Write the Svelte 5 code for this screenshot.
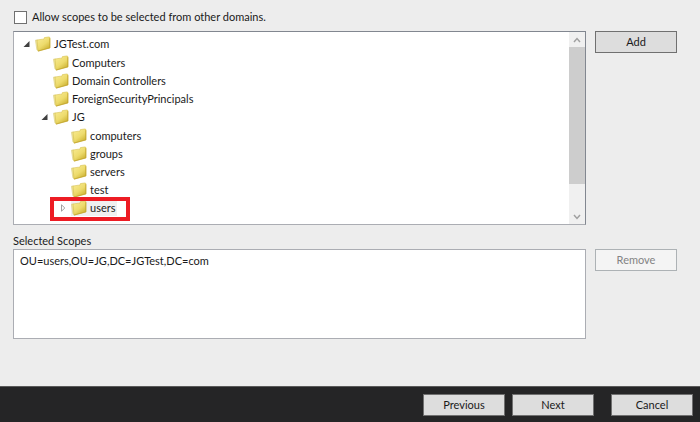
<script>
  let allowOther = $state(false);
  let selected = $state('users');

  const tree = [
    {
      name: 'JGTest.com',
      open: true,
      children: [
        { name: 'Computers' },
        { name: 'Domain Controllers' },
        { name: 'ForeignSecurityPrincipals' },
        {
          name: 'JG',
          open: true,
          children: [
            { name: 'computers' },
            { name: 'groups' },
            { name: 'servers' },
            { name: 'test' },
            { name: 'users', collapsed: true, marked: true }
          ]
        }
      ]
    }
  ];

  const scopes = ['OU=users,OU=JG,DC=JGTest,DC=com'];
</script>

{#snippet folder()}
  <svg class="folder" viewBox="0 0 16 16" aria-hidden="true">
    <defs>
      <linearGradient id="front" x1="0.2" y1="0" x2="0.9" y2="1">
        <stop offset="0" stop-color="#f8ea90" />
        <stop offset="0.5" stop-color="#eddb6c" />
        <stop offset="1" stop-color="#c4a824" />
      </linearGradient>
    </defs>
    <path d="M0.4 4.2 L2.2 3.8 L3.2 14.8 L1.8 13.4 Z" fill="#f1e7a0" stroke="#d5c670" stroke-width="0.5" />
    <path d="M2 4 L7.4 3.2 L8.4 3.6 L9.4 1.6 L14 0.9 L15 1.6 L15 12 L3 15.2 Z" fill="url(#front)" stroke="#d0b840" stroke-width="0.5" />
    <path d="M14.8 2.2 L14.8 11.8 L3.2 15" fill="none" stroke="#bfa12a" stroke-width="0.7" />
  </svg>
{/snippet}

{#snippet branch(nodes)}
  {#each nodes as node}
    <li role="treeitem" aria-selected={selected === node.name} aria-expanded={node.children ? node.open : undefined}>
      <div class="row">
        {#if node.children}
          <button class="toggle" aria-label="Collapse {node.name}">
            <svg viewBox="0 0 8 8"><path d="M6.5 1 V7 H0.5 Z" fill="#404040" /></svg>
          </button>
        {:else if node.collapsed}
          <button class="toggle" aria-label="Expand {node.name}">
            <svg viewBox="0 0 8 8"><path d="M2.5 0.8 V7.2 L5.8 4 Z" fill="#fff" stroke="#969696" stroke-width="0.9" /></svg>
          </button>
        {:else}
          <span class="toggle"></span>
        {/if}
        <button class="node" class:selected={selected === node.name} onclick={() => (selected = node.name)}>
          {@render folder()}
          <span>{node.name}</span>
        </button>
        {#if node.marked}<span class="mark"></span>{/if}
      </div>
      {#if node.children}
        <ul role="group">{@render branch(node.children)}</ul>
      {/if}
    </li>
  {/each}
{/snippet}

<div class="window">
  <main>
    <label class="allow">
      <input type="checkbox" bind:checked={allowOther} />
      <span>Allow scopes to be selected from other domains.</span>
    </label>

    <div class="line">
      <div class="box tree-box">
        <ul class="tree" role="tree">{@render branch(tree)}</ul>
        <div class="scrollbar">
          <button aria-label="Scroll up"><svg viewBox="0 0 8 6"><path d="M1 5 L4 1.6 L7 5" /></svg></button>
          <div class="thumb"></div>
          <button aria-label="Scroll down"><svg viewBox="0 0 8 6"><path d="M1 1 L4 4.4 L7 1" /></svg></button>
        </div>
      </div>
      <button class="push">Add</button>
    </div>

    <h2 id="scopes-title">Selected Scopes</h2>

    <div class="line">
      <ul class="box scopes" aria-labelledby="scopes-title">
        {#each scopes as scope}
          <li>{scope}</li>
        {/each}
      </ul>
      <button class="push" disabled>Remove</button>
    </div>
  </main>

  <footer>
    <button class="push">Previous</button>
    <button class="push">Next</button>
    <button class="push cancel">Cancel</button>
  </footer>
</div>

<style>
  .window {
    min-height: 100vh;
    display: flex;
    flex-direction: column;
    background: #ededed;
    color: #1a1a1a;
    font-family: Lato, 'Open Sans', sans-serif;
    font-size: 11px;
    line-height: 16px;
  }
  main {
    flex: 1;
    padding: 9px 23px 16px 13px;
  }
  ul {
    list-style: none;
    margin: 0;
    padding: 0;
  }
  button {
    font: inherit;
    color: inherit;
    padding: 0;
    border: 0;
    background: none;
  }
  .allow {
    display: flex;
    width: fit-content;
    align-items: center;
    gap: 5px;
    margin-bottom: 6px;
  }
  input {
    appearance: none;
    box-sizing: border-box;
    width: 13px;
    height: 13px;
    margin: 0 0 0 1px;
    border: 1px solid #707070;
    background: #fff;
  }
  .line {
    display: flex;
    align-items: flex-start;
    gap: 9px;
  }
  .box {
    box-sizing: border-box;
    flex: 1;
    background: #fff;
    border: 1px solid #abadb3;
  }
  .tree-box {
    display: flex;
    height: 194px;
    border-color: #828790 #828790 #abadb3 #abadb3;
  }
  .tree {
    flex: 1;
    padding: 3px 0 0 9px;
  }
  .tree ul {
    padding: 1px 0 0 18px;
  }
  .row {
    position: relative;
    display: flex;
    align-items: center;
    height: 18px;
  }
  .toggle {
    width: 12px;
    height: 8px;
    display: flex;
  }
  .toggle svg {
    width: 8px;
    height: 8px;
  }
  .node {
    display: flex;
    align-items: center;
    gap: 3px;
    padding-right: 2px;
    line-height: 16px;
  }
  .node.selected {
    background: #f0f0f0;
  }
  .folder {
    width: 16px;
    height: 16px;
  }
  .mark {
    position: absolute;
    left: -9px;
    top: -2px;
    box-sizing: border-box;
    width: 80px;
    height: 24px;
    border: 4px solid #ed1c24;
    pointer-events: none;
  }
  .scrollbar {
    width: 16px;
    display: flex;
    flex-direction: column;
    background: #f0f0f0;
  }
  .scrollbar button {
    height: 15px;
    display: flex;
    align-items: center;
    justify-content: center;
  }
  .scrollbar svg {
    width: 8px;
    height: 6px;
    fill: none;
    stroke: #a0a0a0;
    stroke-width: 1.5;
  }
  .thumb {
    height: 137px;
    margin-bottom: auto;
    background: #cdcdcd;
  }
  h2 {
    margin: 8px 0 0;
    font-size: 11px;
    font-weight: 400;
    line-height: 16px;
  }
  .scopes {
    height: 90px;
    padding: 3px 6px;
  }
  .push {
    box-sizing: border-box;
    width: 82px;
    height: 22px;
    border: 1px solid #707070;
    background: #dddddd;
  }
  .push:disabled {
    border-color: #adb2b5;
    background: #f4f4f4;
    color: #838383;
  }
  footer {
    box-sizing: border-box;
    display: flex;
    justify-content: flex-end;
    gap: 7px;
    padding: 7px 7px 6px;
    border-top: 1px solid #5a5a5a;
    background: #252526;
  }
  .cancel {
    margin-left: 10px;
  }
</style>
